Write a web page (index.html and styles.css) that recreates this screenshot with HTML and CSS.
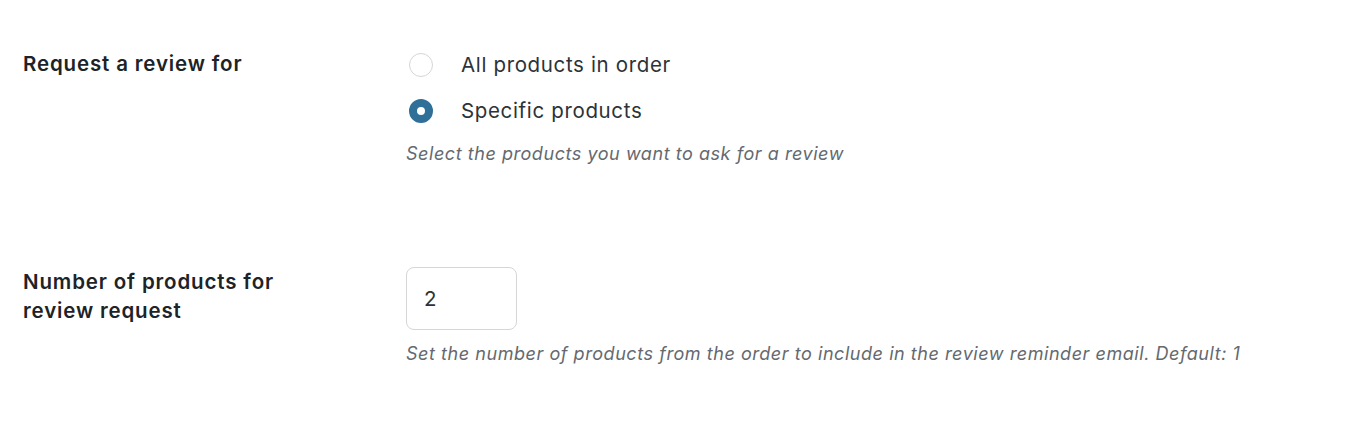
FILE: index.html
```html
<!DOCTYPE html>
<html>
<head>
<meta charset="utf-8">
<link rel="stylesheet" href="styles.css">
</head>
<body>
<div class="form">
  <div class="row row-first">
    <div class="label">Request a review for</div>
    <div class="field">
      <div class="radios">
        <label class="radio"><span class="dot"></span><span class="rtext">All products in order</span></label>
        <label class="radio"><span class="dot checked"></span><span class="rtext">Specific products</span></label>
      </div>
      <p class="desc">Select the products you want to ask for a review</p>
    </div>
  </div>
  <div class="row row-second">
    <div class="label">Number of products for review request</div>
    <div class="field">
      <div class="input">2</div>
      <p class="desc">Set the number of products from the order to include in the review reminder email. Default: 1</p>
    </div>
  </div>
</div>
</body>
</html>
```
FILE: styles.css
```css
html, body {
  margin: 0;
  padding: 0;
  background: #ffffff;
}
body {
  font-family: Inter, "Noto Sans", sans-serif;
  color: #1d2327;
  width: 1362px;
  height: 426px;
  overflow: hidden;
}
.form {
  display: flex;
  flex-direction: column;
  padding: 0 0 0 23px;
}
.row {
  display: flex;
}
.row-first {
  padding-top: 49px;
}
.row-second {
  padding-top: 101px;
}
.label {
  width: 383px;
  font-size: 20.5px;
  font-weight: 600;
  line-height: 29px;
  letter-spacing: 0.85px;
  color: #1d2327;
}
.row-second .label {
  width: 280px;
  margin-right: 103px;
}
.field {
  display: flex;
  flex-direction: column;
}
.radios {
  display: flex;
  flex-direction: column;
  gap: 20px;
  padding-top: 3px;
}
.radio {
  display: flex;
  align-items: center;
  gap: 28px;
  padding-left: 3px;
}
.dot {
  width: 24px;
  height: 24px;
  border-radius: 50%;
  border: 1px solid #d6d6d6;
  box-sizing: border-box;
  background: #fff;
  flex-shrink: 0;
}
.dot.checked {
  border: 8px solid #2f6f98;
  background: #fff;
}
.rtext {
  font-size: 20.5px;
  line-height: 26px;
  letter-spacing: 0.65px;
  color: #2c3338;
}
.desc {
  margin: 0;
  font-size: 18px;
  font-style: italic;
  color: #646970;
  line-height: 24px;
  letter-spacing: 0.55px;
}
.radios + .desc {
  margin-top: 18px;
}
.input {
  width: 111px;
  height: 63px;
  box-sizing: border-box;
  border: 1px solid #d4d6d8;
  border-radius: 8px;
  font-size: 20.5px;
  color: #2c3338;
  padding-left: 17px;
  display: flex;
  align-items: center;
}
.input + .desc {
  margin-top: 12px;
}
```
